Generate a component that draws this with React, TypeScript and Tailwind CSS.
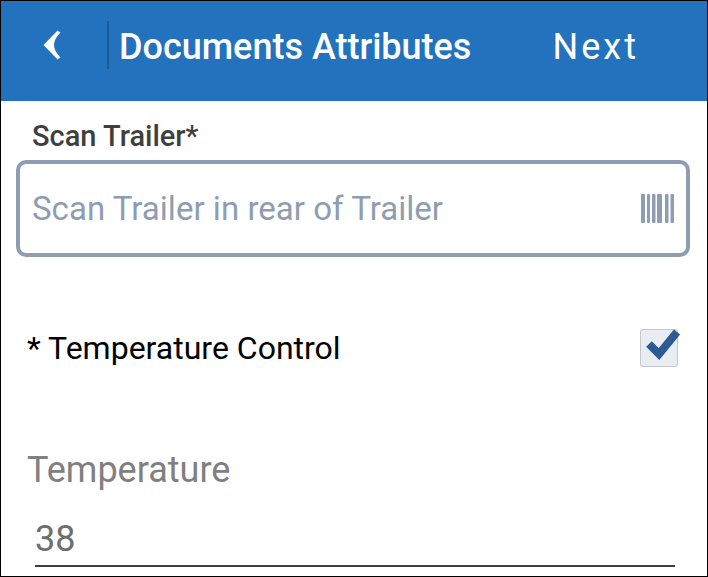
export default function App() {
  const font = { fontFamily: "Roboto, sans-serif" };
  return (
    <div style={font} className="w-[708px] h-[577px] border border-black bg-white overflow-hidden flex flex-col">
      <header className="h-[100px] bg-[#2272bd] flex items-center shrink-0 relative">
        <div className="w-[106px] flex pl-[42px] pb-[12px] shrink-0">
          <svg width="18" height="30" viewBox="0 0 18 30"><path d="M14.5 0.5 L17.5 2.5 Q11 9 11 15 Q11 21 17.5 27.5 L14.5 29.5 L0.5 15 Z" fill="#fff" /></svg>
        </div>
        <div className="w-[2px] h-[48px] bg-[#1c5a99] mb-[12px] shrink-0" />
        <div className="ml-[10px] text-[36px] font-medium text-white leading-none mb-[8px] whitespace-nowrap">Documents Attributes</div>
        <div className="ml-auto mr-[68px] text-[36px] tracking-[3px] text-white leading-none mb-[8px]">Next</div>
      </header>
      <main className="flex-1 flex flex-col">
        <div className="pl-[31px] pt-[20px] text-[29px] font-medium leading-[30px] text-[#3f3f3f]">Scan Trailer*</div>
        <div className="mt-[9px] ml-[15px] w-[674px] h-[97px] border-[4px] border-[#8f9db3] rounded-[10px] flex items-center pl-[12px] pr-[11px]">
          <span className="text-[33px] text-[#8f9db3] tracking-[0.03px]">Scan Trailer in rear of Trailer</span>
          <svg className="ml-auto" width="34" height="29" viewBox="0 0 34 29" fill="#8f9db3">
            <rect x="0" y="0" width="4" height="29" rx="1" /><rect x="6" y="0" width="3" height="29" rx="1" /><rect x="11" y="0" width="3.5" height="29" rx="1" /><rect x="16" y="0" width="5" height="29" rx="1" /><rect x="24" y="0" width="3.5" height="29" rx="1" /><rect x="29.5" y="0" width="3.5" height="29" rx="1" />
          </svg>
        </div>
        <div className="mt-[71px] pl-[26px] pr-[29px] flex items-center justify-between">
          <span className="text-[32px] text-black leading-[40px]">* Temperature Control</span>
          <div className="relative w-[38px] h-[38px] bg-[#e9ecf1] border border-[#c3c7cd] rounded-[3px]">
            <svg className="absolute left-[4px] top-[-5px]" width="36" height="36" viewBox="0 0 36 36"><path d="M4 19 L14 29 L32 7" fill="none" stroke="#2c5a92" strokeWidth="8" /></svg>
          </div>
        </div>
        <div className="mt-[82px] pl-[26px] text-[36px] text-[#808080] leading-[40px]">Temperature</div>
        <div className="mt-[23px] ml-[34px] w-[640px] h-[54px] border-b-[2px] border-[#3f3f3f] flex items-end">
          <span className="text-[36px] leading-[44px] text-[#6e6e6e] pb-[4px]">38</span>
        </div>
      </main>
    </div>
  );
}
